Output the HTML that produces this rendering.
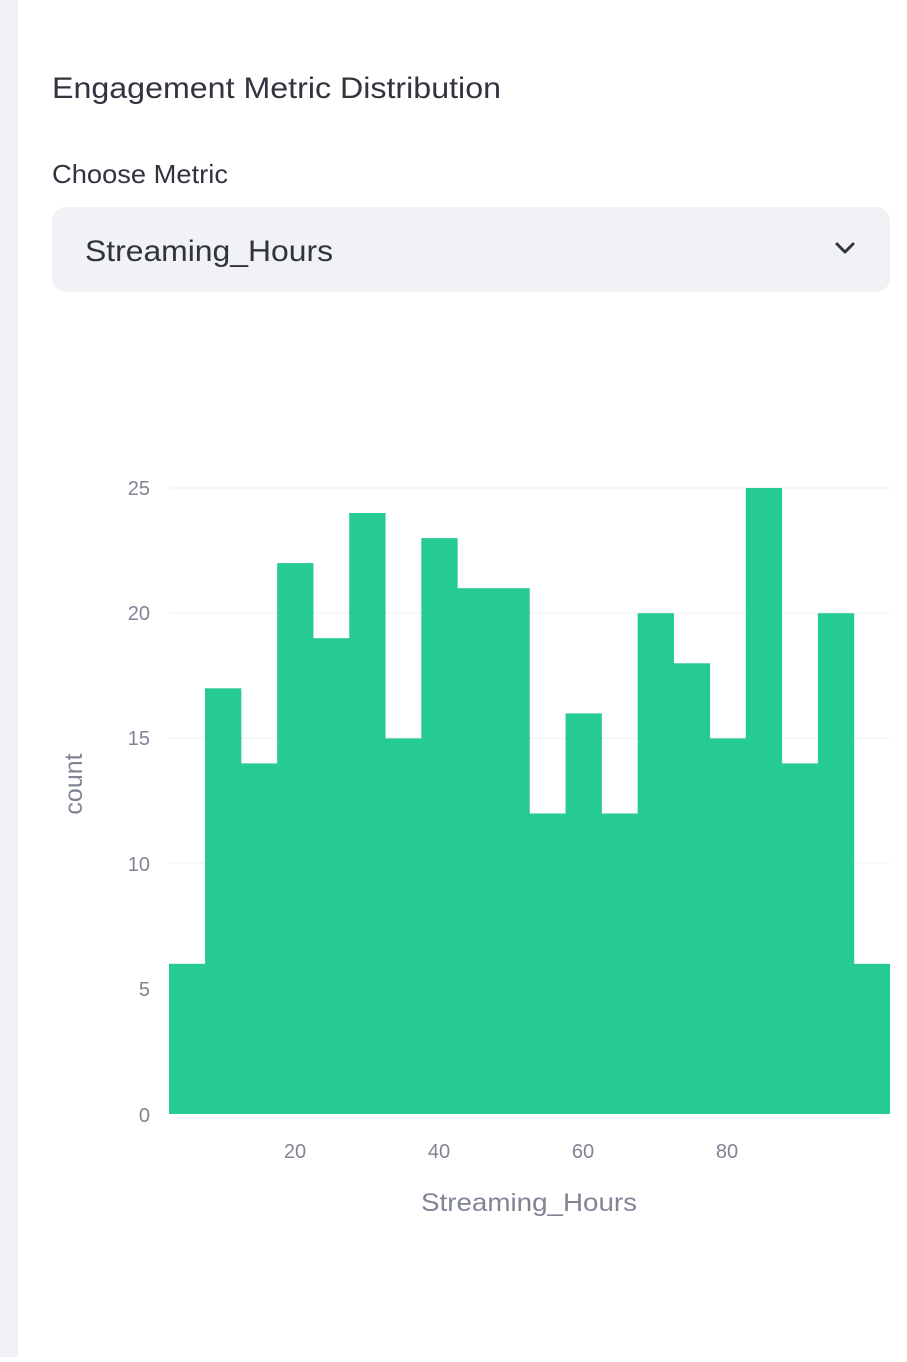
<!DOCTYPE html>
<html><head><meta charset="utf-8"><style>
html,body{margin:0;padding:0;background:#fff;}
body{width:907px;height:1357px;overflow:hidden;font-family:"Liberation Sans",sans-serif;}
</style></head><body>
<svg width="907" height="1357" viewBox="0 0 907 1357" xmlns="http://www.w3.org/2000/svg" font-family="Liberation Sans, sans-serif">
<rect x="0" y="0" width="18" height="1357" fill="#f0f2f6"/>
<text x="52" y="98" font-size="30" fill="#31333f" textLength="449" lengthAdjust="spacingAndGlyphs">Engagement Metric Distribution</text>
<text x="52" y="183" font-size="26" fill="#31333f" textLength="176" lengthAdjust="spacingAndGlyphs">Choose Metric</text>
<rect x="52" y="207" width="838" height="85" rx="14" fill="#f0f2f6"/>
<text x="85" y="261" font-size="30" fill="#31333f" textLength="248" lengthAdjust="spacingAndGlyphs">Streaming_Hours</text>
<path d="M837 244 L845 252 L853 244" fill="none" stroke="#31333f" stroke-width="3" stroke-linecap="round" stroke-linejoin="round"/>
<g stroke="#eef0f3" stroke-width="1">
<line x1="169" y1="488" x2="890" y2="488"/>
<line x1="169" y1="613" x2="890" y2="613"/>
<line x1="169" y1="738" x2="890" y2="738"/>
<line x1="169" y1="863" x2="890" y2="863"/>
<line x1="169" y1="988" x2="890" y2="988"/>
</g>
<g font-size="20" fill="#808495" text-anchor="end">
<text x="150" y="495">25</text>
<text x="150" y="620">20</text>
<text x="150" y="745">15</text>
<text x="150" y="871">10</text>
<text x="150" y="996">5</text>
<text x="150" y="1122">0</text>
</g>
<g fill="#26ca95">
<rect x="169" y="963.8" width="36.3" height="150.2"/>
<rect x="205.05" y="688.3" width="36.3" height="425.7"/>
<rect x="241.1" y="763.4" width="36.3" height="350.6"/>
<rect x="277.15" y="563.1" width="36.3" height="550.9"/>
<rect x="313.2" y="638.2" width="36.3" height="475.8"/>
<rect x="349.25" y="513" width="36.3" height="601"/>
<rect x="385.3" y="738.4" width="36.3" height="375.6"/>
<rect x="421.35" y="538.1" width="36.3" height="575.9"/>
<rect x="457.4" y="588.2" width="36.3" height="525.8"/>
<rect x="493.45" y="588.2" width="36.3" height="525.8"/>
<rect x="529.5" y="813.5" width="36.3" height="300.5"/>
<rect x="565.55" y="713.4" width="36.3" height="400.6"/>
<rect x="601.6" y="813.5" width="36.3" height="300.5"/>
<rect x="637.65" y="613.2" width="36.3" height="500.8"/>
<rect x="673.7" y="663.3" width="36.3" height="450.7"/>
<rect x="709.75" y="738.4" width="36.3" height="375.6"/>
<rect x="745.8" y="488" width="36.3" height="626"/>
<rect x="781.85" y="763.4" width="36.3" height="350.6"/>
<rect x="817.9" y="613.2" width="36.3" height="500.8"/>
<rect x="853.95" y="963.8" width="36.05" height="150.2"/>
</g>
<g font-size="20" fill="#808495" text-anchor="middle">
<text x="295" y="1158">20</text>
<text x="439" y="1158">40</text>
<text x="583" y="1158">60</text>
<text x="727" y="1158">80</text>
</g>
<text x="529" y="1211" font-size="25" fill="#808495" text-anchor="middle" textLength="216" lengthAdjust="spacingAndGlyphs">Streaming_Hours</text>
<text transform="translate(82,784) rotate(-90)" font-size="25" fill="#808495" text-anchor="middle">count</text>
</svg>
</body></html>
